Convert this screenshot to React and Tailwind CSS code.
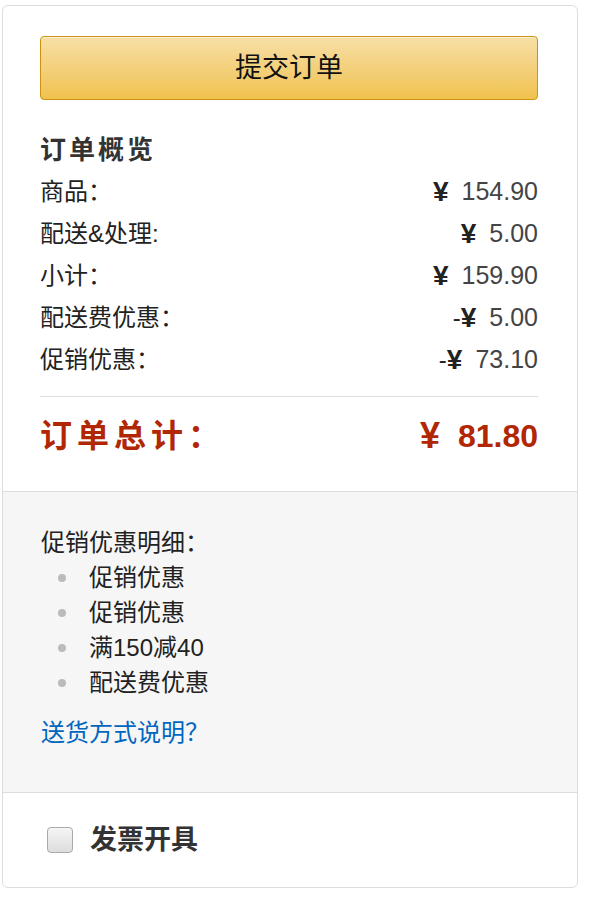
import React, { useState } from 'react';

const rows = [
  { label: '商品：', sign: '', value: '154.90' },
  { label: '配送&处理:', sign: '', value: '5.00' },
  { label: '小计：', sign: '', value: '159.90' },
  { label: '配送费优惠：', sign: '-', value: '5.00' },
  { label: '促销优惠：', sign: '-', value: '73.10' },
];

const promos = ['促销优惠', '促销优惠', '满150减40', '配送费优惠'];

export default function App() {
  const [invoice, setInvoice] = useState(false);

  return (
    <div
      className="pl-[2px] pt-[5px] text-[#111]"
      style={{ fontFamily: '"Liberation Sans", Arial, "Noto Sans CJK SC", sans-serif' }}
    >
      <div className="w-[576px] border border-[#ddd] rounded-[6px] overflow-hidden bg-white">
        <div className="pl-[37px] pr-[39px] pt-[30px] pb-[28px]">
          <button className="w-full h-[64px] rounded-[4px] border border-[#c89411] bg-gradient-to-b from-[#f7dfa5] to-[#f0c14b] text-[27px] text-[#111] shadow-[inset_0_1px_0_rgba(255,255,255,0.6)]">
            提交订单
          </button>

          <h3 className="mt-[29px] text-[26px] tracking-[3px] font-bold leading-[42px] text-[#333]">订单概览</h3>
          {rows.map((r, i) => (
            <div key={i} className="flex justify-between items-center h-[42px] text-[24px] text-[#222]">
              <span>{r.label}</span>
              <span className="flex items-center">
                {r.sign && <span className="text-[#222]">{r.sign}</span>}
                <span className="text-[28px] leading-none font-bold text-[#222] mr-[13px]">¥</span>
                <span className="text-[25px] text-[#444]">{r.value}</span>
              </span>
            </div>
          ))}

          <div className="mt-[15px] border-t border-[#ddd]" />

          <div className="flex justify-between items-center pt-[12px] h-[66px] font-bold text-[#b12704]">
            <span className="text-[32px] tracking-[5px]">订单总计：</span>
            <span className="flex items-center text-[32px]">
              <span className="text-[36px] leading-none mr-[18px]">¥</span>
              <span>81.80</span>
            </span>
          </div>
        </div>

        <div className="border-t border-[#ddd] bg-[#f6f6f6] px-[38px] pt-[33px] pb-[42px] text-[24px] leading-[35px] text-[#222]">
          <div>促销优惠明细：</div>
          <ul>
            {promos.map((p, i) => (
              <li key={i} className="flex items-center">
                <span className="ml-[17px] mr-[23px] w-[8px] h-[8px] rounded-full bg-[#bbb]" />
                <span>{p}</span>
              </li>
            ))}
          </ul>
          <a href="#" className="block mt-[15px] text-[#0066c0]">送货方式说明？</a>
        </div>

        <div className="border-t border-[#ddd] h-[95px] px-[44px] flex items-center">
          <label className="flex items-center gap-[17px] cursor-pointer">
            <input
              type="checkbox"
              checked={invoice}
              onChange={() => setInvoice(!invoice)}
              className="w-[26px] h-[26px] appearance-none rounded-[4px] border border-[#aaa] bg-gradient-to-b from-[#f5f5f5] to-[#ddd] checked:bg-[#e47911]"
            />
            <span className="text-[27px] font-bold text-[#333]">发票开具</span>
          </label>
        </div>
      </div>
    </div>
  );
}
